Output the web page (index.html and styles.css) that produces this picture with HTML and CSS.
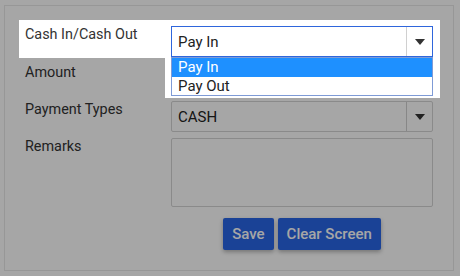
FILE: index.html
```html
<!DOCTYPE html>
<html lang="en">
<head>
    <meta charset="UTF-8">
    <title>Cash In / Cash Out</title>
    <link rel="stylesheet" href="styles.css">
</head>
<body>
<div class="panel">
    <div class="form-row spot">
        <label>Cash In/Cash Out</label>
        <div class="select focused">
            <span class="value">Pay In</span>
            <span class="arrow"></span>
        </div>
        <div class="dropdown-wrap">
            <ul class="dropdown">
                <li class="active">Pay In</li>
                <li>Pay Out</li>
            </ul>
        </div>
    </div>
    <div class="form-row">
        <label>Amount</label>
        <div class="input"></div>
    </div>
    <div class="form-row">
        <label>Payment Types</label>
        <div class="select">
            <span class="value">CASH</span>
            <span class="arrow"></span>
        </div>
    </div>
    <div class="form-row">
        <label>Remarks</label>
        <div class="textarea"></div>
    </div>
    <div class="actions">
        <button class="btn">Save</button>
        <button class="btn">Clear Screen</button>
    </div>
</div>
<div class="overlay"></div>
</body>
</html>
```
FILE: styles.css
```css
body {
    margin: 0;
    background: #fff;
    font-family: Roboto, "Liberation Sans", sans-serif;
    font-size: 14px;
    color: #333;
}

.panel {
    width: 450px;
    height: 266px;
    margin: 5px 0 0 4px;
    padding-top: 14px;
    border: 1px solid #e8e8e8;
    box-sizing: border-box;
}

.form-row {
    position: relative;
    display: grid;
    grid-template-columns: 146px 262px;
    padding: 6px 7px 0 6px;
    margin-left: 14px;
    width: 421px;
    box-sizing: border-box;
}

.form-row label {
    font-size: 14.4px;
    line-height: 16px;
    padding-top: 1px;
}

.spot {
    z-index: 2;
    background: #fff;
    padding-bottom: 1px;
}

.select, .input {
    position: relative;
    height: 31px;
    border: 1px solid #d4d4d4;
    border-radius: 2px;
    box-sizing: border-box;
    background: #fff;
    display: flex;
    align-items: center;
}

.select .value {
    flex: 1;
    padding-left: 6px;
    font-size: 15px;
    color: #222;
}

.select .arrow {
    width: 25px;
    align-self: stretch;
    border-left: 1px solid #d0d0d0;
    position: relative;
}

.select .arrow::after {
    content: "";
    position: absolute;
    left: 8px;
    top: 12px;
    border-left: 5px solid transparent;
    border-right: 5px solid transparent;
    border-top: 6px solid #333;
}

.focused {
    border-color: #2f66dc;
    border-radius: 0;
}

.textarea {
    height: 69px;
    border: 1px solid #d4d4d4;
    border-radius: 2px;
    box-sizing: border-box;
    background: #fff;
}

.dropdown-wrap {
    position: absolute;
    left: 146px;
    top: 100%;
    margin-top: -1px;
    padding: 0 7px 2px 6px;
    background: #fff;
}

.dropdown {
    list-style: none;
    margin: 0;
    padding: 0;
    width: 262px;
    border: 1px solid #7f9bd6;
    box-sizing: border-box;
    background: #fff;
    color: #222;
    font-size: 15px;
}

.dropdown li {
    height: 18px;
    line-height: 18px;
    padding-left: 6px;
}

.dropdown li.active {
    background: #1e90ff;
    color: #fff;
    height: 19px;
}

.actions {
    display: flex;
    justify-content: center;
    gap: 4px;
    margin: 11px 0 0 166px;
    width: 262px;
}

.btn {
    height: 32px;
    padding: 0 9px;
    border: 0;
    border-radius: 2px;
    background: #2966e6;
    color: #fff;
    font-family: inherit;
    font-size: 15px;
    font-weight: 500;
    box-shadow: 0 2px 4px rgba(0, 0, 0, .3);
}

.overlay {
    position: fixed;
    inset: 0;
    background: rgba(0, 0, 0, .35);
    z-index: 1;
}
```
